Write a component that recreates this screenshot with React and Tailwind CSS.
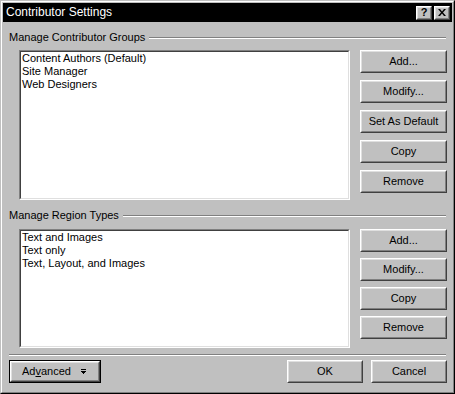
import React from 'react';

const raisedOuter = 'border border-t-white border-l-white border-b-[#404040] border-r-[#404040]';
const raisedInner = 'border border-t-[#dfdfdf] border-l-[#dfdfdf] border-b-[#808080] border-r-[#808080]';

function Button({ children, className = '', inner = '' }) {
  return (
    <div className={`${raisedOuter} bg-[#c0c0c0] ${className}`}>
      <div className={`${raisedInner} h-full flex items-center justify-center ${inner}`}>{children}</div>
    </div>
  );
}

function GroupLabel({ text }) {
  return (
    <div className="flex items-center h-[13px] pr-[6px]">
      <span className="leading-[13px] whitespace-nowrap">{text}</span>
      <div className="flex-1 ml-[4px] h-[2px] border-t border-t-[#808080] border-b border-b-white" />
    </div>
  );
}

function ListBox({ items, height }) {
  return (
    <div
      className={`w-[331px] ${height} border border-t-[#808080] border-l-[#808080] border-b-white border-r-white`}
    >
      <div className="h-full border border-t-[#404040] border-l-[#404040] border-b-[#dfdfdf] border-r-[#dfdfdf] bg-white pl-px">
        {items.map((item) => (
          <div key={item} className="leading-[13px] h-[13px] whitespace-nowrap">
            {item}
          </div>
        ))}
      </div>
    </div>
  );
}

export default function App() {
  const groups = ['Content Authors (Default)', 'Site Manager', 'Web Designers'];
  const regions = ['Text and Images', 'Text only', 'Text, Layout, and Images'];

  return (
    <div
      className="w-[455px] h-[394px] text-[11px] text-black border border-t-[#c0c0c0] border-l-[#c0c0c0] border-b-black border-r-black"
      style={{ fontFamily: '"Liberation Sans", Arial, sans-serif' }}
    >
      <div className="h-full border border-t-white border-l-white border-b-[#808080] border-r-[#808080] bg-[#c0c0c0] p-px flex flex-col">
        {/* title bar */}
        <div className="h-[19px] bg-black flex items-center pl-[3px] pr-[2px]">
          <span className="text-white text-[12px] leading-[19px] flex-1">Contributor Settings</span>
          <div className="flex gap-[2px]">
            <Button className="w-[16px] h-[14px]" inner="text-[11px] font-bold leading-none">
              ?
            </Button>
            <Button className="w-[16px] h-[14px]">
              <svg width="8" height="7" viewBox="0 0 8 7">
                <path d="M0 0h2l2 2.5L6 0h2L5 3.5 8 7H6L4 4.5 2 7H0l3-3.5z" fill="black" />
              </svg>
            </Button>
          </div>
        </div>

        <div className="pl-[6px] flex flex-col">
          <div className="mt-[9px]">
            <GroupLabel text="Manage Contributor Groups" />
          </div>
          <div className="flex mt-[6px] ml-[10px]">
            <ListBox items={groups} height="h-[150px]" />
            <div className="ml-[10px] flex flex-col gap-[7px]">
              {['Add...', 'Modify...', 'Set As Default', 'Copy', 'Remove'].map((b) => (
                <Button key={b} className="w-[87px] h-[23px]">
                  {b}
                </Button>
              ))}
            </div>
          </div>

          <div className="mt-[9px]">
            <GroupLabel text="Manage Region Types" />
          </div>
          <div className="flex mt-[7px] ml-[10px]">
            <ListBox items={regions} height="h-[119px]" />
            <div className="ml-[10px] flex flex-col gap-[6px]">
              {['Add...', 'Modify...', 'Copy', 'Remove'].map((b) => (
                <Button key={b} className="w-[87px] h-[23px]">
                  {b}
                </Button>
              ))}
            </div>
          </div>

          <div className="mt-[6px] mr-[6px] h-[2px] border-t border-t-[#808080] border-b border-b-white" />

          <div className="flex mt-[4px] pr-[5px]">
            <div className="border border-black w-[92px] h-[23px]">
              <Button className="h-full" inner="justify-start pl-[10px]">
                <span>
                  Ad<span className="underline">v</span>anced
                </span>
                <svg className="ml-[10px]" width="5" height="6" viewBox="0 0 5 6">
                  <rect x="0" y="0" width="5" height="1" fill="black" />
                  <rect x="0" y="2" width="5" height="1" fill="black" />
                  <rect x="1" y="3" width="3" height="1" fill="black" />
                  <rect x="2" y="4" width="1" height="1" fill="black" />
                </svg>
              </Button>
            </div>
            <div className="flex-1" />
            <Button className="w-[76px] h-[23px]">OK</Button>
            <Button className="w-[76px] h-[23px] ml-[8px]">Cancel</Button>
          </div>
        </div>
      </div>
    </div>
  );
}
